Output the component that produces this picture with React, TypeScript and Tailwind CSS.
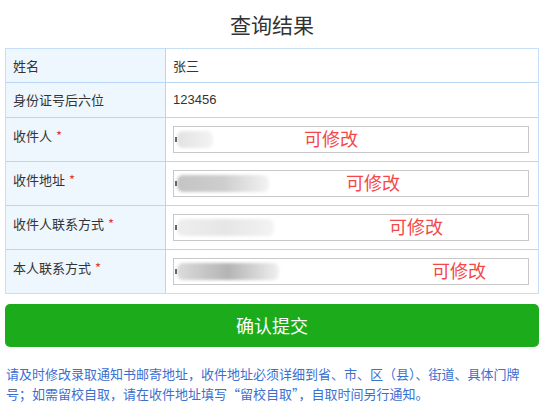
import React from "react";

const font = { fontFamily: '"Noto Sans CJK SC", "Noto Sans", sans-serif' };

function Label({ text, req }: { text: string; req?: boolean }) {
  return (
    <span>
      {text}
      {req && <span className="text-[#e53935] ml-[4px]">*</span>}
    </span>
  );
}

type InRow = { label: string; blobW: number; blobClass: string; tagLeft: number };

const inputRows: InRow[] = [
  { label: "收件人", blobW: 36, blobClass: "bg-gradient-to-r from-[#e2e2e2] via-[#ebebeb] to-[#f3f3f3]", tagLeft: 130 },
  { label: "收件地址", blobW: 92, blobClass: "bg-gradient-to-r from-[#c4c4c4] via-[#cdcdcd] to-[#f3f3f3]", tagLeft: 172 },
  { label: "收件人联系方式", blobW: 97, blobClass: "bg-gradient-to-r from-[#eeeeee] via-[#e6e6e6] to-[#f3f3f3]", tagLeft: 215 },
  { label: "本人联系方式", blobW: 102, blobClass: "bg-gradient-to-r from-[#dcdcdc] via-[#b4b4b4] to-[#f0f0f0]", tagLeft: 258 },
];

export default function App() {
  return (
    <div className="w-[544px] h-[419px] bg-white text-[#333]" style={font}>
      <div className="h-[48px] flex items-center justify-center text-[21px] text-[#333] pt-[1px]">
        查询结果
      </div>
      <div className="mx-[5px] border border-[#c6def7] text-[13px]">
        <div className="flex h-[34px] border-b border-[#b9d7f5]">
          <div className="w-[160px] bg-[#eef6fe] border-r border-[#b9d7f5] flex items-center pl-[7px]">姓名</div>
          <div className="flex-1 flex items-center pl-[7px]">张三</div>
        </div>
        <div className="flex h-[35px] border-b border-[#b9d7f5]">
          <div className="w-[160px] bg-[#eef6fe] border-r border-[#b9d7f5] flex items-center pl-[7px]">身份证号后六位</div>
          <div className="flex-1 flex items-center pl-[7px]" style={{ fontFamily: '"Liberation Sans", Arial, sans-serif' }}>123456</div>
        </div>
        {inputRows.map((r, i) => (
          <div
            key={r.label}
            className={`flex ${i === 3 ? "h-[43px]" : "h-[44px] border-b border-[#b9d7f5]"}`}
          >
            <div className="w-[160px] bg-[#eef6fe] border-r border-[#b9d7f5] pl-[7px] pt-[9px] leading-[18px]">
              <Label text={r.label} req />
            </div>
            <div className="flex-1 flex items-center pl-[7px] pr-[9px]">
              <div className="relative w-full h-[27px] border border-[#c9c9c9] bg-white">
                <div className="absolute left-[1px] top-[2px] h-[21px] overflow-hidden" style={{ width: r.blobW + 4 }}>
                  <div
                    className={`absolute left-[2px] top-[2px] h-[17px] rounded-[6px] blur-[1.5px] ${r.blobClass}`}
                    style={{ width: r.blobW }}
                  />
                  <div className="absolute left-0 top-[8px] w-[2px] h-[5px] bg-[#666]" />
                </div>
                <span
                  className="absolute top-[-1px] text-[18px] leading-[24px] text-[#f44848] whitespace-nowrap"
                  style={{ left: r.tagLeft }}
                >
                  可修改
                </span>
              </div>
            </div>
          </div>
        ))}
      </div>
      <div className="mx-[5px] mt-[10px] h-[43px] rounded-[5px] bg-[#1bab1b] flex items-center justify-center text-white text-[18px]">
        确认提交
      </div>
      <div className="mx-[5px] mt-[17px] text-[13px] leading-[20px] text-[#3b6fd0] pl-[1px]">
        请及时修改录取通知书邮寄地址，收件地址必须详细到省、市、区（县）、街道、具体门牌
        <br />
        号；如需留校自取，请在收件地址填写“留校自取”，自取时间另行通知。
      </div>
    </div>
  );
}
